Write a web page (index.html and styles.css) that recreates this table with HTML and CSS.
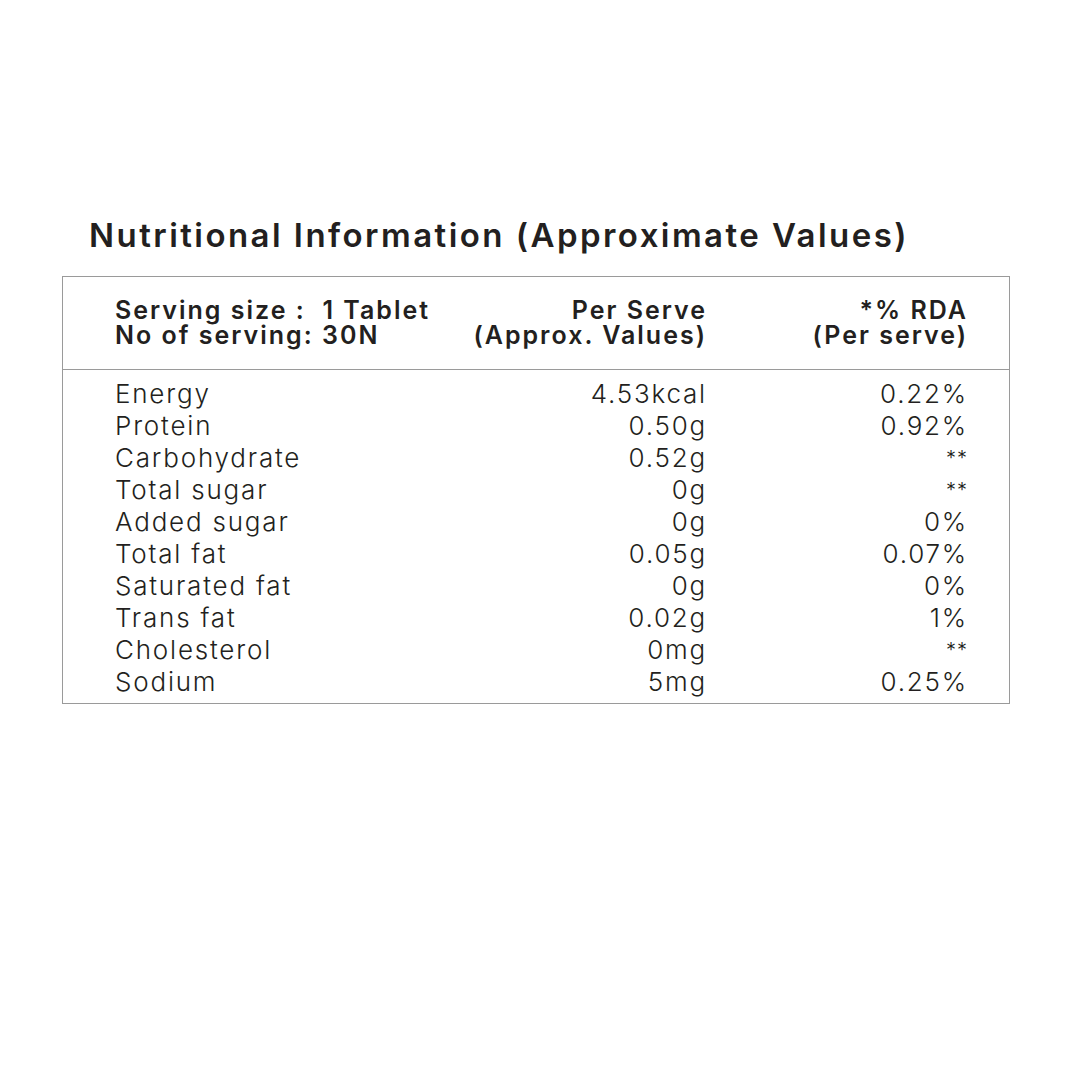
FILE: index.html
```html
<!DOCTYPE html>
<html lang="en">
<head>
<meta charset="utf-8">
<title>Nutritional Information</title>
<link rel="stylesheet" href="styles.css">
</head>
<body>
<main class="page">
  <h1 class="title">Nutritional Information (Approximate Values)</h1>
  <section class="panel">
    <div class="head grid">
      <div class="c1"><div class="ln">Serving size :&nbsp; 1 Tablet</div><div class="ln">No of serving: 30N</div></div>
      <div class="c2"><div class="ln">Per Serve</div><div class="ln">(Approx. Values)</div></div>
      <div class="c3"><div class="ln">*% RDA</div><div class="ln">(Per serve)</div></div>
    </div>
    <div class="body grid">
      <div class="c1">Energy</div><div class="c2">4.53kcal</div><div class="c3">0.22%</div>
      <div class="c1">Protein</div><div class="c2">0.50g</div><div class="c3">0.92%</div>
      <div class="c1">Carbohydrate</div><div class="c2">0.52g</div><div class="c3 star">**</div>
      <div class="c1">Total sugar</div><div class="c2">0g</div><div class="c3 star">**</div>
      <div class="c1">Added sugar</div><div class="c2">0g</div><div class="c3">0%</div>
      <div class="c1">Total fat</div><div class="c2">0.05g</div><div class="c3">0.07%</div>
      <div class="c1">Saturated fat</div><div class="c2">0g</div><div class="c3">0%</div>
      <div class="c1">Trans fat</div><div class="c2">0.02g</div><div class="c3">1%</div>
      <div class="c1">Cholesterol</div><div class="c2">0mg</div><div class="c3 star">**</div>
      <div class="c1">Sodium</div><div class="c2">5mg</div><div class="c3">0.25%</div>
    </div>
  </section>
</main>
</body>
</html>
```
FILE: styles.css
```css
html, body {
  margin: 0;
  padding: 0;
  background: #ffffff;
}
body {
  font-family: Inter, "Liberation Sans", sans-serif;
  color: #231f20;
}
.page {
  width: 1080px;
  height: 1080px;
  padding: 216px 0 0 62px;
  box-sizing: border-box;
}
.title {
  margin: 0 0 21px 27px;
  font-size: 33px;
  line-height: 39px;
  font-weight: 600;
  letter-spacing: 2.45px;
  white-space: nowrap;
}
.panel {
  width: 948px;
  box-sizing: border-box;
  border: 1px solid #9a9a9a;
}
.grid {
  display: grid;
  grid-template-columns: 330px 260px 261px;
  padding-left: 52px;
  padding-right: 43px;
}
.head {
  padding-top: 21px;
  padding-bottom: 21px;
  border-bottom: 1px solid #9a9a9a;
  font-size: 25px;
  font-weight: 600;
  letter-spacing: 2px;
}
.head .ln {
  height: 25px;
  line-height: 25px;
}
.body {
  padding-top: 8px;
  padding-bottom: 5px;
  font-size: 26px;
  line-height: 32px;
  font-weight: 350;
  letter-spacing: 1.8px;
}
.c1 { text-align: left; white-space: nowrap; }
.c2, .c3 { text-align: right; white-space: nowrap; margin-right: -2px; }
.star { font-size: 20px; letter-spacing: 1px; }
```
